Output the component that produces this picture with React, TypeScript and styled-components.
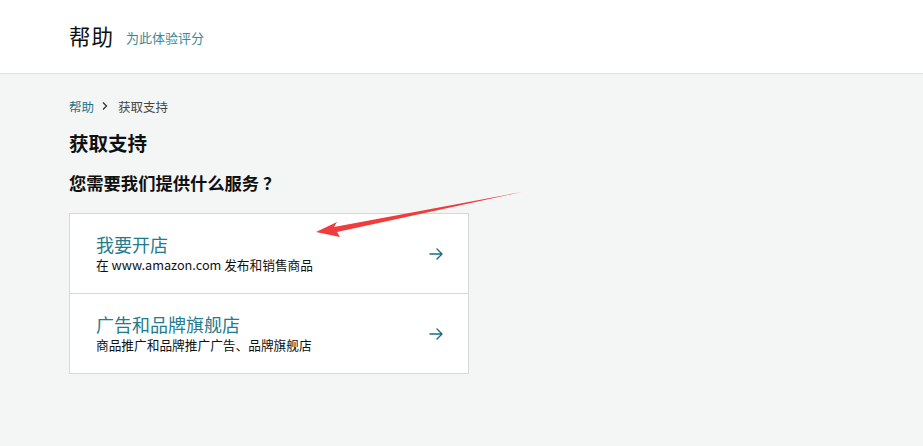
import styled, { createGlobalStyle } from "styled-components";

const GlobalStyle = createGlobalStyle`
  html, body {
    margin: 0;
    padding: 0;
    background: #f4f6f6;
    font-family: "Noto Sans CJK SC", "Noto Sans", sans-serif;
  }
`;

const options = [
  { title: "我要开店", desc: "在 www.amazon.com 发布和销售商品" },
  { title: "广告和品牌旗舰店", desc: "商品推广和品牌推广广告、品牌旗舰店" },
];

const App = () => {
  return (
    <Page>
      <GlobalStyle />
      <Header>
        <HeaderTitle>帮助</HeaderTitle>
        <RateLink>为此体验评分</RateLink>
      </Header>
      <Main>
        <Breadcrumb>
          <Crumb>帮助</Crumb>
          <svg width="12" height="12" viewBox="0 0 12 12">
            <path d="M4 2.5 L7.5 6 L4 9.5" fill="none" stroke="#333" strokeWidth="1.3" />
          </svg>
          <CurrentCrumb>获取支持</CurrentCrumb>
        </Breadcrumb>
        <PageTitle>获取支持</PageTitle>
        <Question>
          您需要我们提供什么服务<Mark>？</Mark>
        </Question>
        <Card>
          {options.map((o) => (
            <Row key={o.title}>
              <RowText>
                <RowTitle>{o.title}</RowTitle>
                <RowDesc>{o.desc}</RowDesc>
              </RowText>
              <svg width="16" height="16" viewBox="0 0 16 16">
                <path
                  d="M2 8 H14 M9 3 L14 8 L9 13"
                  fill="none"
                  stroke="#1a6d80"
                  strokeWidth="1.4"
                  strokeLinecap="round"
                  strokeLinejoin="round"
                />
              </svg>
            </Row>
          ))}
        </Card>
      </Main>
      <Annotation width="220" height="60" viewBox="0 0 220 60">
        <path d="M218 1 L30 36 L33 31 L12 41 L36 46 L33 41 Z" fill="#f03c3c" />
      </Annotation>
    </Page>
  );
};

export default App;

const Page = styled.div`
  position: relative;
  min-height: 446px;
`;

const Header = styled.div`
  height: 73px;
  background: #fff;
  border-bottom: 1px solid #dfe3e3;
  display: flex;
  align-items: center;
  padding-left: 69px;
  gap: 12px;
`;

const HeaderTitle = styled.div`
  font-size: 21.5px;
  color: #0f1111;
  letter-spacing: 1px;
  margin-top: -3px;
`;

const RateLink = styled.div`
  font-size: 13px;
  color: #3b8a96;
  margin-top: 2px;
`;

const Main = styled.div`
  padding: 22px 69px 0;
`;

const Breadcrumb = styled.div`
  display: flex;
  align-items: center;
  gap: 5px;
  font-size: 12.5px;
  height: 20px;
`;

const Crumb = styled.span`
  color: #1a7384;
`;

const CurrentCrumb = styled.span`
  color: #444;
  margin-left: 2px;
`;

const PageTitle = styled.h1`
  margin: 14px 0 0;
  font-size: 19.5px;
  font-weight: 700;
  color: #0f1111;
  line-height: 26px;
`;

const Question = styled.h2`
  margin: 14px 0 0;
  font-size: 17.3px;
  font-weight: 700;
  color: #0f1111;
  line-height: 26px;
`;

const Mark = styled.span`
  margin-left: 4px;
`;

const Card = styled.div`
  margin-top: 17px;
  width: 398px;
  background: #fff;
  border: 1px solid #d5d9d9;
`;

const Row = styled.div`
  height: 79px;
  display: flex;
  align-items: center;
  justify-content: space-between;
  padding: 0 24px 0 26px;
  & + & {
    border-top: 1px solid #d5d9d9;
  }
`;

const RowText = styled.div`
  display: flex;
  flex-direction: column;
  gap: 1px;
`;

const RowTitle = styled.div`
  font-size: 18px;
  color: #237b8c;
  line-height: 22px;
`;

const RowDesc = styled.div`
  font-size: 12.7px;
  color: #0f1111;
  line-height: 18px;
`;

const Annotation = styled.svg`
  position: absolute;
  left: 304px;
  top: 191px;
  pointer-events: none;
`;
